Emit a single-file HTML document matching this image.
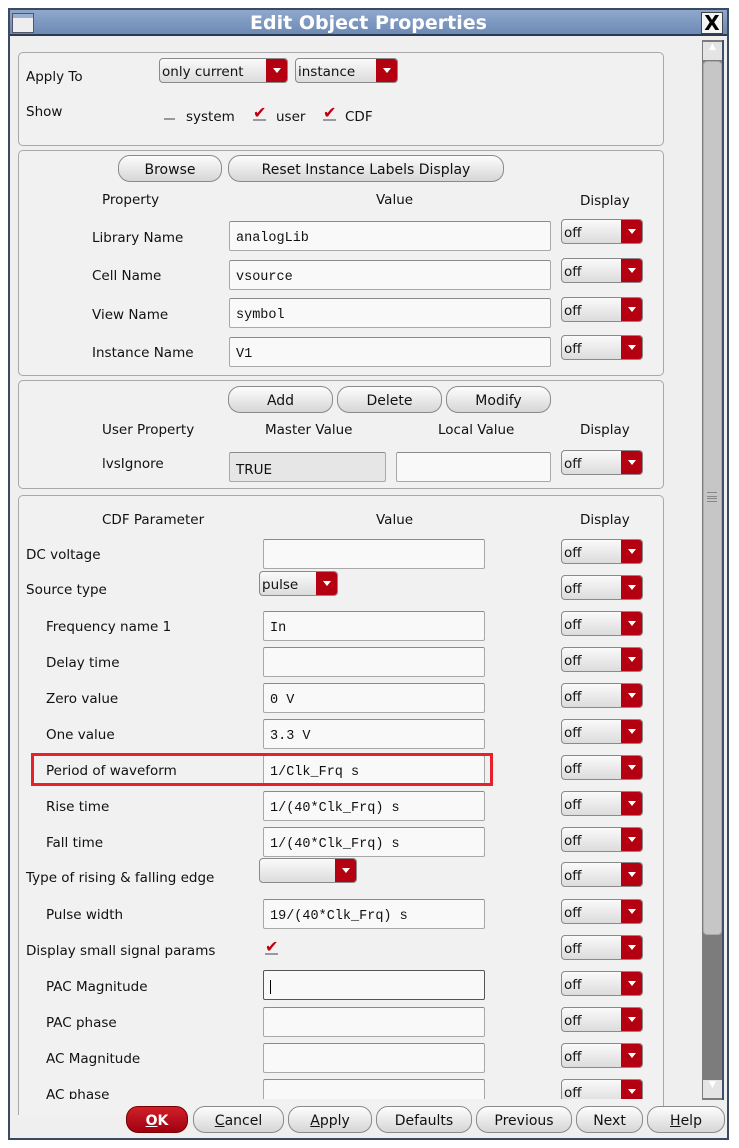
<!DOCTYPE html>
<html><head><meta charset="utf-8"><style>
*{box-sizing:border-box;margin:0;padding:0}
body{width:739px;height:1148px;background:#fff;position:relative;overflow:hidden;font-family:"DejaVu Sans","Liberation Sans",sans-serif;font-size:13.5px;color:#111}
.a{position:absolute}
.win{left:8px;top:8px;width:721px;height:1132px;border:2px solid #3a4a60;background:#efefef}
.title{left:10px;top:10px;width:717px;height:26px;background:linear-gradient(#8fa8cc,#6d8ab5);color:#fff;font-weight:bold;font-size:19px;text-align:center;line-height:26px;border-bottom:2px solid #2a3a55}
.grp{border:1px solid #a8a8a8;border-radius:5px;background:#f1f1f1}
.lbl{white-space:nowrap;line-height:18px}
.tf{background:#f9f9f9;border:1px solid #a8a8a8;border-top-color:#8a8a8a;border-radius:2px;font-family:"Liberation Mono","DejaVu Sans Mono",monospace;font-size:13.5px;padding:9px 0 0 6px;height:30px}
.dd{height:25px;border:1px solid #8a8a8a;border-radius:4px;background:linear-gradient(#fafafa,#dcdcdc);line-height:26px;padding-left:2px;overflow:hidden}
.dd:after{content:"";position:absolute;right:0;top:0;width:21px;height:100%;background:#b40010}
.dd:before{content:"";position:absolute;right:6px;top:9px;border:4px solid transparent;border-top:5px solid #fff;z-index:2}
.btn{height:27px;border:1px solid #8a8a8a;border-radius:12px;background:linear-gradient(#fdfdfd,#d6d6d6);text-align:center;line-height:28px;font-size:14px}
.chk{width:11px;height:11px;border-bottom:2px solid #999}
.ck{color:#c00010;font-size:16px;font-weight:bold;border-bottom:2px solid #999;line-height:14px;width:13px;height:15px;overflow:visible}
</style></head><body>
<div class="a win"></div>
<div class="a title">Edit Object Properties</div>
<div class="a" style="left:12px;top:13px;width:22px;height:20px;border:1px solid #556;background:linear-gradient(#9ab0d0 0 4px,#eee 4px)"></div>
<div class="a" style="left:701px;top:12px;width:22px;height:22px;background:#f4f4f4;border:1px solid #444;color:#000;font-size:20px;line-height:20px;text-align:center;font-weight:bold">X</div>

<div class="a" style="left:702px;top:40px;width:22px;height:1060px;background:#7c7c7c;border-right:2px solid #40506a"></div>
<div class="a" style="left:703px;top:42px;width:19px;height:18px;background:#e4e4e4;color:#fff;font-size:9px;text-align:center">▲</div>
<div class="a" style="left:703px;top:61px;width:19px;height:874px;background:#c6c6c6;border-radius:4px;border:1px solid #aaa"></div>
<div class="a" style="left:707px;top:492px;width:10px;height:10px;border-top:1px solid #888;border-bottom:1px solid #888;"><div style="border-top:1px solid #888;margin-top:3px;height:3px;border-bottom:1px solid #888"></div></div>
<div class="a" style="left:703px;top:1080px;width:19px;height:18px;background:#e4e4e4;color:#fff;font-size:9px;text-align:center">▼</div>

<div class="a grp" style="left:18px;top:52px;width:646px;height:94px"></div>
<div class="a lbl" style="left:26px;top:68px">Apply To</div>
<div class="a lbl" style="left:26px;top:103px">Show</div>
<div class="a dd" style="left:159px;top:58px;width:129px">only current</div>
<div class="a dd" style="left:295px;top:58px;width:103px">instance</div>
<div class="a chk" style="left:164px;top:109px"></div><div class="a lbl" style="left:186px;top:108px">system</div>
<div class="a ck" style="left:253px;top:106px">✔</div><div class="a lbl" style="left:276px;top:108px">user</div>
<div class="a ck" style="left:323px;top:106px">✔</div><div class="a lbl" style="left:345px;top:108px">CDF</div>

<div class="a grp" style="left:18px;top:150px;width:646px;height:226px"></div>
<div class="a btn" style="left:118px;top:155px;width:104px">Browse</div>
<div class="a btn" style="left:228px;top:155px;width:276px">Reset Instance Labels Display</div>
<div class="a lbl" style="left:102px;top:191px">Property</div>
<div class="a lbl" style="left:376px;top:191px">Value</div>
<div class="a lbl" style="left:580px;top:192px">Display</div>
<div class="a lbl" style="left:92px;top:229px">Library Name</div><div class="a tf" style="left:229px;top:221px;width:322px">analogLib</div><div class="a dd" style="left:561px;top:219px;width:82px">off</div>
<div class="a lbl" style="left:92px;top:267px">Cell Name</div><div class="a tf" style="left:229px;top:260px;width:322px">vsource</div><div class="a dd" style="left:561px;top:258px;width:82px">off</div>
<div class="a lbl" style="left:92px;top:306px">View Name</div><div class="a tf" style="left:229px;top:298px;width:322px">symbol</div><div class="a dd" style="left:561px;top:297px;width:82px">off</div>
<div class="a lbl" style="left:92px;top:344px">Instance Name</div><div class="a tf" style="left:229px;top:337px;width:322px">V1</div><div class="a dd" style="left:561px;top:335px;width:82px">off</div>

<div class="a grp" style="left:18px;top:380px;width:646px;height:109px"></div>
<div class="a btn" style="left:228px;top:386px;width:105px">Add</div>
<div class="a btn" style="left:337px;top:386px;width:105px">Delete</div>
<div class="a btn" style="left:446px;top:386px;width:105px">Modify</div>
<div class="a lbl" style="left:102px;top:421px">User Property</div>
<div class="a lbl" style="left:265px;top:421px">Master Value</div>
<div class="a lbl" style="left:438px;top:421px">Local Value</div>
<div class="a lbl" style="left:580px;top:421px">Display</div>
<div class="a lbl" style="left:102px;top:455px">lvsIgnore</div>
<div class="a tf" style="left:229px;top:452px;width:157px;background:#e6e6e6;font-family:'DejaVu Sans',sans-serif">TRUE</div>
<div class="a tf" style="left:396px;top:452px;width:155px"></div>
<div class="a dd" style="left:561px;top:450px;width:82px">off</div>

<div class="a grp" style="left:18px;top:495px;width:646px;height:620px;border-bottom:none;border-radius:5px 5px 0 0"></div>
<div class="a lbl" style="left:102px;top:511px">CDF Parameter</div>
<div class="a lbl" style="left:376px;top:511px">Value</div>
<div class="a lbl" style="left:580px;top:511px">Display</div>

<div class="a lbl" style="left:26px;top:546px">DC voltage</div><div class="a tf" style="left:263px;top:539px;width:222px"></div><div class="a dd" style="left:561px;top:539px;width:82px">off</div>
<div class="a lbl" style="left:26px;top:581px">Source type</div><div class="a dd" style="left:259px;top:571px;width:79px">pulse</div><div class="a dd" style="left:561px;top:575px;width:82px">off</div>
<div class="a lbl" style="left:46px;top:618px">Frequency name 1</div><div class="a tf" style="left:263px;top:611px;width:222px">In</div><div class="a dd" style="left:561px;top:611px;width:82px">off</div>
<div class="a lbl" style="left:46px;top:654px">Delay time</div><div class="a tf" style="left:263px;top:647px;width:222px"></div><div class="a dd" style="left:561px;top:647px;width:82px">off</div>
<div class="a lbl" style="left:46px;top:690px">Zero value</div><div class="a tf" style="left:263px;top:683px;width:222px">0 V</div><div class="a dd" style="left:561px;top:683px;width:82px">off</div>
<div class="a lbl" style="left:46px;top:726px">One value</div><div class="a tf" style="left:263px;top:719px;width:222px">3.3 V</div><div class="a dd" style="left:561px;top:719px;width:82px">off</div>
<div class="a lbl" style="left:46px;top:762px">Period of waveform</div><div class="a tf" style="left:263px;top:755px;width:222px">1/Clk_Frq s</div><div class="a dd" style="left:561px;top:755px;width:82px">off</div>
<div class="a" style="left:31px;top:753px;width:462px;height:33px;border:3px solid #e8202a"></div>
<div class="a lbl" style="left:46px;top:798px">Rise time</div><div class="a tf" style="left:263px;top:791px;width:222px">1/(40*Clk_Frq) s</div><div class="a dd" style="left:561px;top:791px;width:82px">off</div>
<div class="a lbl" style="left:46px;top:834px">Fall time</div><div class="a tf" style="left:263px;top:827px;width:222px">1/(40*Clk_Frq) s</div><div class="a dd" style="left:561px;top:827px;width:82px">off</div>
<div class="a lbl" style="left:26px;top:869px">Type of rising &amp; falling edge</div><div class="a dd" style="left:259px;top:858px;width:98px"></div><div class="a dd" style="left:561px;top:862px;width:82px">off</div>
<div class="a lbl" style="left:46px;top:906px">Pulse width</div><div class="a tf" style="left:263px;top:899px;width:222px">19/(40*Clk_Frq) s</div><div class="a dd" style="left:561px;top:899px;width:82px">off</div>
<div class="a lbl" style="left:26px;top:942px">Display small signal params</div><div class="a ck" style="left:265px;top:940px">✔</div><div class="a dd" style="left:561px;top:935px;width:82px">off</div>
<div class="a lbl" style="left:46px;top:978px">PAC Magnitude</div><div class="a tf" style="left:263px;top:970px;width:222px;border:1px solid #555"><span style="border-left:1px solid #000;display:inline-block;height:14px"></span></div><div class="a dd" style="left:561px;top:971px;width:82px">off</div>
<div class="a lbl" style="left:46px;top:1014px">PAC phase</div><div class="a tf" style="left:263px;top:1007px;width:222px"></div><div class="a dd" style="left:561px;top:1007px;width:82px">off</div>
<div class="a lbl" style="left:46px;top:1050px">AC Magnitude</div><div class="a tf" style="left:263px;top:1043px;width:222px"></div><div class="a dd" style="left:561px;top:1043px;width:82px">off</div>
<div class="a" style="left:20px;top:1078px;width:680px;height:21px;overflow:hidden">
<div class="a lbl" style="left:26px;top:8px">AC phase</div><div class="a tf" style="left:243px;top:1px;width:222px"></div><div class="a dd" style="left:541px;top:1px;width:82px;position:absolute">off</div></div>

<div class="a btn" style="left:126px;top:1106px;width:62px;background:linear-gradient(#d0202a,#a00010);color:#fff;font-weight:bold;border-color:#700"><u>O</u>K</div>
<div class="a btn" style="left:193px;top:1106px;width:91px"><u>C</u>ancel</div>
<div class="a btn" style="left:288px;top:1106px;width:84px"><u>A</u>pply</div>
<div class="a btn" style="left:376px;top:1106px;width:96px">Defaults</div>
<div class="a btn" style="left:476px;top:1106px;width:96px">Previous</div>
<div class="a btn" style="left:576px;top:1106px;width:67px">Next</div>
<div class="a btn" style="left:647px;top:1106px;width:78px"><u>H</u>elp</div>
</body></html>
